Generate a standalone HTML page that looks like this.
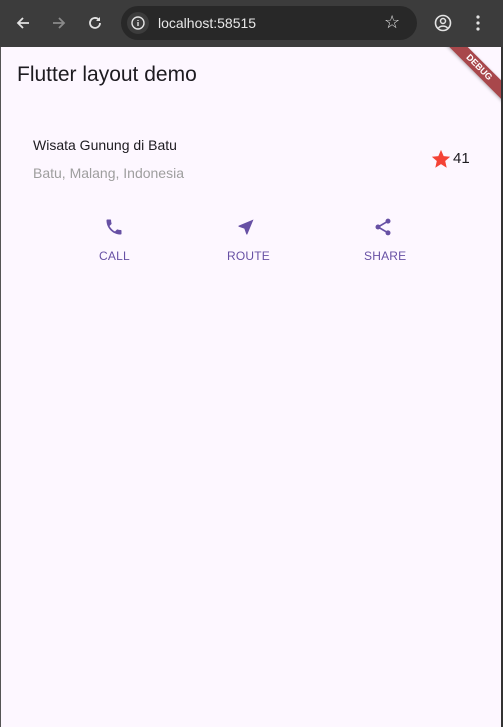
<!DOCTYPE html>
<html><head><style>
*{margin:0;padding:0;box-sizing:border-box}
body{width:503px;height:727px;overflow:hidden;background:#fdf7ff;font-family:"Liberation Sans",sans-serif;position:relative}
.chrome{position:absolute;left:0;top:0;width:503px;height:47px;background:#3c3c3c}
.url{position:absolute;left:121px;top:6px;width:296px;height:34px;border-radius:17px;background:#282828}
.info{position:absolute;left:127px;top:12px;width:22px;height:22px;border-radius:11px;background:#3c3c3c}
.t{position:absolute;white-space:nowrap}
.frameL{position:absolute;left:0;top:47px;width:1px;height:680px;background:#555}
.frameR{position:absolute;right:0;top:47px;width:2px;height:680px;background:#333}
.lbl{position:absolute;top:249px;font-size:12px;color:#6750a4;letter-spacing:0.2px}
.bwrap{position:absolute;left:421px;top:47px;width:80px;height:80px;overflow:hidden}
.ban{position:absolute;left:8px;top:14px;width:100px;height:13px;background:#a8474b;transform:rotate(45deg);color:#fff;font-size:9px;font-weight:bold;text-align:center;line-height:13px;box-shadow:0 1px 3px rgba(0,0,0,.3)}
</style></head><body>
<div class="chrome"></div>
<svg class="t" style="left:14px;top:14px" width="18" height="18" viewBox="0 0 18 18"><path d="M15 9H4M9 4L4 9l5 5" stroke="#e3e3e3" stroke-width="1.8" fill="none"/></svg>
<svg class="t" style="left:50px;top:14px" width="18" height="18" viewBox="0 0 18 18"><path d="M3 9h11M9 4l5 5-5 5" stroke="#8a8a8a" stroke-width="1.8" fill="none"/></svg>
<svg class="t" style="left:86px;top:14px" width="18" height="18" viewBox="0 0 18 18"><path d="M14 9a5 5 0 1 1-1.5-3.6" stroke="#e3e3e3" stroke-width="1.8" fill="none"/><path d="M14 3v4h-4z" fill="#e3e3e3"/></svg>
<div class="url"></div><div class="info"></div>
<svg class="t" style="left:131px;top:16px" width="14" height="14" viewBox="0 0 14 14"><circle cx="7" cy="7" r="6" stroke="#e3e3e3" stroke-width="1.4" fill="none"/><path d="M7 6v4M7 4v1" stroke="#e3e3e3" stroke-width="1.4"/></svg>
<div class="t" style="left:158px;top:15px;font-size:14px;color:#e8e8e8">localhost:58515</div>
<div class="t" style="left:384px;top:12px;font-size:18px;color:#e3e3e3">☆</div>
<svg class="t" style="left:434px;top:14px" width="18" height="18" viewBox="0 0 18 18"><circle cx="9" cy="9" r="7.5" stroke="#e3e3e3" stroke-width="1.6" fill="none"/><circle cx="9" cy="7" r="2.5" stroke="#e3e3e3" stroke-width="1.5" fill="none"/><path d="M4.5 14c2-2.5 7-2.5 9 0" stroke="#e3e3e3" stroke-width="1.5" fill="none"/></svg>
<svg class="t" style="left:476px;top:14px" width="4" height="18"><circle cx="2" cy="3" r="1.6" fill="#e3e3e3"/><circle cx="2" cy="9" r="1.6" fill="#e3e3e3"/><circle cx="2" cy="15" r="1.6" fill="#e3e3e3"/></svg>
<div class="frameL"></div><div class="frameR"></div>
<div class="t" style="left:17px;top:63px;font-size:21px;color:#1d1b20">Flutter layout demo</div>
<div class="bwrap"><div class="ban">DEBUG</div></div>
<div class="t" style="left:33px;top:137px;font-size:14px;color:#1d1b20;font-weight:500">Wisata Gunung di Batu</div>
<div class="t" style="left:33px;top:165px;font-size:14px;color:#9e9e9e">Batu, Malang, Indonesia</div>
<svg class="t" style="left:430px;top:148px" width="22" height="22" viewBox="0 0 24 24"><path d="M12 2l2.9 6.9 7.1.6-5.4 4.7 1.6 7.3L12 17.6 5.8 21.5l1.6-7.3L2 9.5l7.1-.6z" fill="#f44336"/></svg>
<div class="t" style="left:453px;top:150px;font-size:15px;color:#1d1b20">41</div>
<svg class="t" style="left:104px;top:217px" width="20" height="20" viewBox="0 0 24 24"><path d="M6.6 10.8c1.4 2.8 3.8 5.1 6.6 6.6l2.2-2.2c.3-.3.7-.4 1-.2 1.1.4 2.3.6 3.6.6.6 0 1 .4 1 1V20c0 .6-.4 1-1 1C10.6 21 3 13.4 3 4c0-.6.4-1 1-1h3.5c.6 0 1 .4 1 1 0 1.3.2 2.5.6 3.6.1.3 0 .7-.2 1z" fill="#6750a4"/></svg>
<svg class="t" style="left:236px;top:217px" width="20" height="20" viewBox="0 0 24 24"><path d="M21 3L3 10.5v1l7 2.5 2.5 7h1z" fill="#6750a4"/></svg>
<svg class="t" style="left:373px;top:217px" width="20" height="20" viewBox="0 0 24 24"><circle cx="18" cy="5" r="3" fill="#6750a4"/><circle cx="6" cy="12" r="3" fill="#6750a4"/><circle cx="18" cy="19" r="3" fill="#6750a4"/><path d="M6 12L18 5M6 12l12 7" stroke="#6750a4" stroke-width="2"/></svg>
<div class="lbl" style="left:99px">CALL</div>
<div class="lbl" style="left:227px">ROUTE</div>
<div class="lbl" style="left:364px">SHARE</div>
</body></html>
